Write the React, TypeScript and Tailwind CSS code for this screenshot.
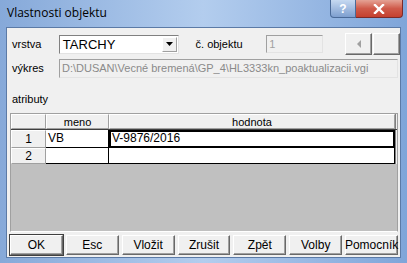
import React from 'react'

const buttons = ['OK', 'Esc', 'Vložit', 'Zrušit', 'Zpět', 'Volby', 'Pomocník']

// raised 3D look used by header cells and buttons
const raised = 'border-t border-l border-t-white border-l-white border-r border-b border-r-[#a0a0a0] border-b-[#a0a0a0]'
const btn = 'border-t border-l border-t-white border-l-white border-r border-b border-r-[#696969] border-b-[#696969] shadow-[inset_-1px_-1px_0_#a0a0a0]'
const sunken = 'border border-t-[#a0a0a0] border-l-[#a0a0a0] border-r-[#e3e3e3] border-b-[#e3e3e3]'

const App = () => {
  return (
    <div className="w-[407px] h-[263px] overflow-hidden flex flex-col bg-gradient-to-r from-[#86a9d9] via-[#b3cdee] to-[#7fa5d9] font-['Liberation_Sans',sans-serif] text-black">
      {/* title bar */}
      <div className="h-[27px] flex items-start shrink-0">
        <span className="ml-[7px] mt-[5px] text-[12px] leading-[15px] font-['Open_Sans',sans-serif] text-black">
          Vlastnosti objektu
        </span>
        <div className="ml-auto mr-[4px] flex">
          <div className="w-[26px] h-[18px] rounded-bl-[4px] border border-[#4a6a98] border-t-0 bg-gradient-to-b from-[#c6d9f1] to-[#7e9fcf] flex items-center justify-center text-white text-[12px] font-bold leading-none">
            ?
          </div>
          <div className="w-[47px] h-[18px] rounded-br-[4px] border border-[#7a2a2a] border-t-0 border-l-0 bg-gradient-to-b from-[#e4a295] via-[#cf5a4a] to-[#c4402f] flex items-center justify-center">
            <svg width="12" height="10" viewBox="0 0 12 10">
              <path d="M2 1 L10 9 M10 1 L2 9" stroke="#fff" strokeWidth="2.4" strokeLinecap="square" />
            </svg>
          </div>
        </div>
      </div>

      {/* client area */}
      <div className="mx-[6px] mb-[5px] flex-1 bg-[#f0f0f0] border border-[#5b7aa6] flex flex-col text-[11px] leading-[13px]">
        {/* row 1 */}
        <div className="flex items-center h-[22px] mt-[5px] pl-[5px]">
          <span className="w-[47px]">vrstva</span>
          <div className="w-[120px] h-[19px] bg-white border border-t-[#808080] border-l-[#808080] border-r-[#e3e3e3] border-b-[#e3e3e3] flex items-center">
            <span className="flex-1 pl-[3px] text-[13px] leading-[15px]">TARCHY</span>
            <div className={`w-[15px] h-[15px] mr-[1px] bg-[#f0f0f0] ${raised} flex items-center justify-center`}>
              <svg width="7" height="4" viewBox="0 0 7 4"><path d="M0 0 H7 L3.5 4 Z" fill="#000" /></svg>
            </div>
          </div>
          <span className="ml-[17px] w-[71px]">č. objektu</span>
          <div className={`w-[57px] h-[18px] bg-[#f0f0f0] ${sunken} flex items-center pl-[2px] text-[#a0a0a0]`}>1</div>
          <div className={`ml-[22px] w-[27px] h-[22px] bg-[#f0f0f0] ${btn} flex items-center justify-center`}>
            <svg width="4" height="8" viewBox="0 0 4 8"><path d="M4 0 V8 L0 4 Z" fill="#a0a0a0" /></svg>
          </div>
          <div className={`ml-[1px] w-[27px] h-[22px] bg-[#f0f0f0] ${btn}`} />
        </div>

        {/* row 2 */}
        <div className="flex items-center h-[19px] mt-[4px] pl-[5px] pr-[2px]">
          <span className="w-[47px]">výkres</span>
          <div className={`flex-1 h-[19px] bg-[#f0f0f0] ${sunken} flex items-center pl-[2px] text-[#8a8a8a] whitespace-nowrap overflow-hidden`}>
            D:\DUSAN\Vecné bremená\GP_4\HL3333kn_poaktualizacii.vgi
          </div>
        </div>

        <span className="mt-[15px] ml-[5px]">atributy</span>

        {/* grid */}
        <div className="mt-[7px] ml-[3px] w-[388px] h-[119px] bg-[#c0c0c0] border border-t-[#a0a0a0] border-l-[#a0a0a0] border-r-[#a0a0a0] border-b-white flex flex-col">
          <div className="flex h-[16px] bg-[#f0f0f0] border-b border-[#404040]">
            <div className={`w-[35px] ${raised}`} />
            <div className={`w-[63px] ${raised} text-center leading-[14px]`}>meno</div>
            <div className={`w-[286px] ${raised} text-center leading-[14px]`}>hodnota</div>
            <div className="flex-1 border-l border-[#808080]" />
          </div>
          <div className="flex h-[18px]">
            <div className={`w-[35px] bg-[#f0f0f0] ${raised} text-center text-[12px] leading-[16px]`}>1</div>
            <div className="w-[63px] bg-white border-r border-b border-black pl-[2px] text-[12px] leading-[16px]">VB</div>
            <div className="w-[286px] bg-white border-2 border-black pl-[1px] text-[12px] leading-[13px]">V-9876/2016</div>
            <div className="flex-1 bg-[#f0f0f0] border-l border-[#808080]" />
          </div>
          <div className="flex h-[16px]">
            <div className={`w-[35px] bg-[#f0f0f0] ${raised} text-center text-[12px] leading-[14px]`}>2</div>
            <div className="w-[63px] bg-white border-r border-b border-black" />
            <div className="w-[286px] bg-white border-b border-r border-black" />
            <div className="flex-1 bg-[#f0f0f0] border-l border-[#808080]" />
          </div>
        </div>

        {/* buttons */}
        <div className="mt-[3px] ml-[3px] w-[388px] h-[20px] grid grid-cols-7 gap-[3px]">
          {buttons.map((b, i) => (
            <div
              key={b}
              className={`flex items-center justify-center text-[12px] bg-[#f0f0f0] ${btn} ${
                i === 0 ? 'outline outline-1 outline-[#404040]' : ''
              }`}
            >
              {b}
            </div>
          ))}
        </div>
      </div>
    </div>
  )
}

export default App
